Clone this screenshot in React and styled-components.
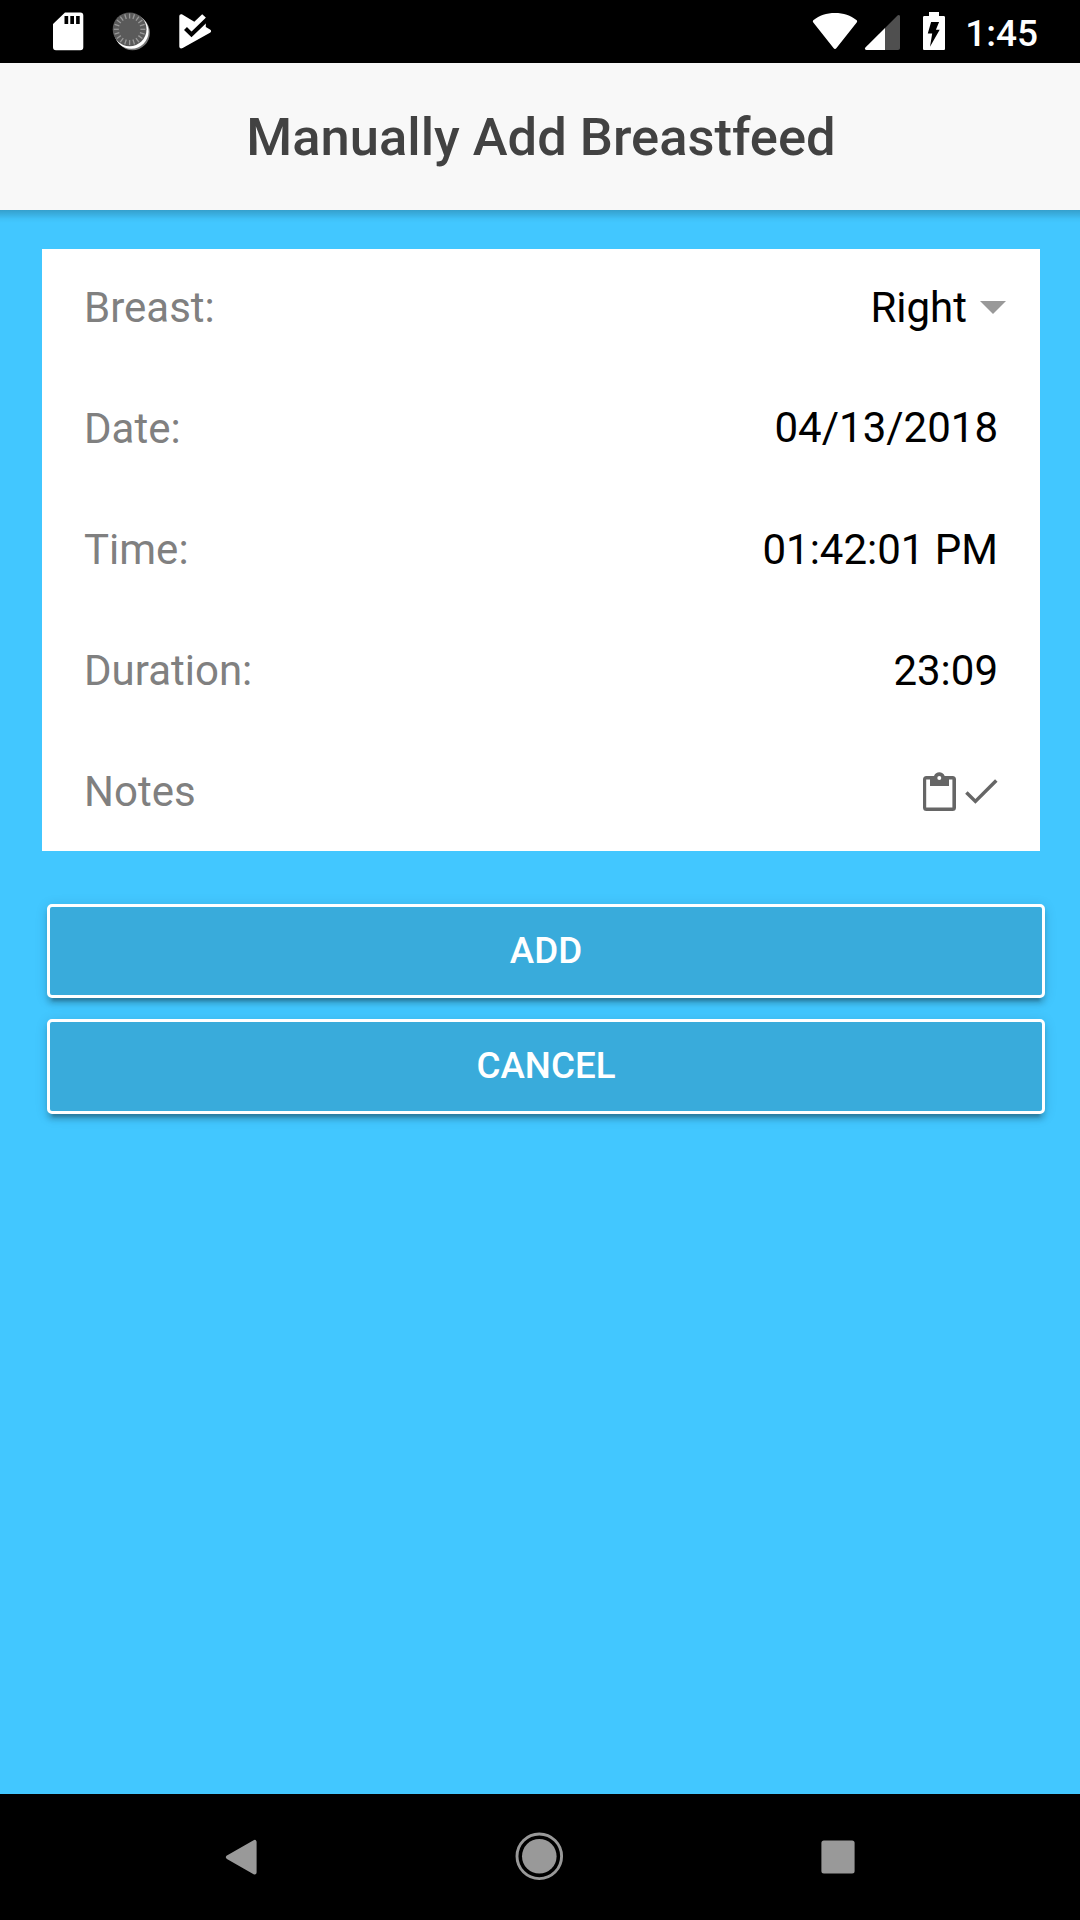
import React from 'react';
import styled, { createGlobalStyle } from 'styled-components';

const GlobalStyle = createGlobalStyle`
  * { box-sizing: border-box; }
  body { margin: 0; background: #42c7ff; font-family: Roboto, "Noto Sans", sans-serif; }
  svg { display: block; flex: none; }
`;

const Screen = styled.div`
  display: flex;
  flex-direction: column;
  width: 1080px;
  height: 1920px;
  background: #42c7ff;
  overflow: hidden;
`;

const StatusBar = styled.div`
  display: flex;
  justify-content: space-between;
  height: 63px;
  flex: none;
  padding: 0 42px 0 44px;
  background: #000;
  color: #fff;
`;

const StatusGroup = styled.div`
  display: flex;
  gap: ${(p) => p.$gap}px;
`;

const Clock = styled.span`
  margin-left: 10px;
  font-size: 37px;
  font-weight: 500;
  line-height: 67px;
`;

const Header = styled.header`
  display: flex;
  align-items: center;
  justify-content: center;
  height: 147px;
  flex: none;
  background: #f8f8f8;
`;

const Title = styled.h1`
  margin: 0;
  padding: 2px 0 0 2px;
  color: #424242;
  font-size: 52.5px;
  font-weight: 500;
  line-height: 63px;
  white-space: nowrap;
`;

const Content = styled.main`
  flex: 1;
  padding: 39px 35px 0 42px;
  background: linear-gradient(
      rgba(0, 0, 0, 0.2) 0,
      rgba(0, 0, 0, 0.11) 5px,
      rgba(0, 0, 0, 0.03) 9px,
      rgba(0, 0, 0, 0) 13px
    )
    no-repeat;
`;

const Card = styled.section`
  display: flex;
  flex-direction: column;
  gap: 3px;
  width: 998px;
  background: #fff;
`;

const Row = styled.div`
  display: flex;
  align-items: center;
  justify-content: space-between;
  height: 118px;
  padding: 0 ${(p) => p.$end ?? 42}px 0 42px;
  font-size: 42px;
  line-height: 50px;
`;

const Label = styled.span`
  color: #808080;
`;

const Value = styled.span`
  color: #000;
  padding-bottom: ${(p) => p.$lift ?? 0}px;
`;

const Select = styled.div`
  display: flex;
  align-items: center;
  gap: 13px;
`;

const Caret = styled.span`
  margin-bottom: 2px;
  border: 13px solid transparent;
  border-top-color: #999;
  border-bottom: 0;
`;

const NoteIcons = styled.div`
  display: flex;
  align-items: center;
  gap: 9px;
  padding-bottom: 2px;
`;

const Actions = styled.div`
  display: flex;
  flex-direction: column;
  gap: 21px;
  width: 998px;
  margin: 53px 0 0 5px;
`;

const Button = styled.button`
  height: ${(p) => p.$height}px;
  padding: 0 0 ${(p) => p.$lift ?? 0}px;
  border: 3px solid #fff;
  border-radius: 5px;
  background: #39abdb;
  color: #fff;
  font: 500 36.75px/44px Roboto, "Noto Sans", sans-serif;
  text-transform: uppercase;
  box-shadow:
    0 5.25px 5.25px 0 rgba(0, 0, 0, 0.14),
    0 7.9px 2.6px -5.25px rgba(0, 0, 0, 0.2),
    0 2.6px 13px 0 rgba(0, 0, 0, 0.12);
`;

const NavBar = styled.nav`
  display: flex;
  align-items: center;
  justify-content: space-between;
  height: 126px;
  flex: none;
  padding: 0 212px 0 211px;
  background: #000;
`;

const SdIcon = () => (
  <svg width="48" height="63" viewBox="0 0 48 63">
    <path fill="#fff" d="M21 12.500h15.300a3 3 0 0 1 3 3v31.800a3 3 0 0 1-3 3h-24.300a3 3 0 0 1-3-3v-23.300z" />
    <path fill="#000" d="M20.500 16h3.700v8h-3.700zM26.300 16h3.700v8h-3.700zM32.100 16h3.600v8h-3.600z" />
  </svg>
);

const SPOKES = Array.from({ length: 20 }, (_, i) => i * 18);

const SpinnerIcon = () => (
  <svg width="48" height="63" viewBox="0 0 48 63">
    <circle cx="25.500" cy="32.800" r="17.400" fill="#777" />
    <circle cx="24.300" cy="31.500" r="17.300" fill="#fff" />
    <circle cx="22.600" cy="29.300" r="16.900" fill="#5a5a5a" />
    {SPOKES.map((a) => (
      <path key={a} d="M22.600 13.500v5" stroke="#999" strokeWidth="1.300" transform={`rotate(${a} 22.600 29.300)`} />
    ))}
  </svg>
);

const PlayCheckIcon = () => (
  <svg width="48" height="63" viewBox="0 0 48 63">
    <path
      fill="#fff"
      d="M9.300 16.500c0-2 1.500-2.800 3-2l12 7.200 7.900-7.400 3.600 3.200V27L40 29.600c1.500.9 1.500 2.300 0 3.200L12.700 48c-2 1-3.400.2-3.400-1.700z"
    />
    <path fill="none" stroke="#000" strokeWidth="4.200" d="M15.500 28.500l6 5.900L38 18.500" />
  </svg>
);

const WifiIcon = () => (
  <svg width="48" height="63" viewBox="0 0 48 63">
    <path fill="#fff" d="M2.300 22.600c-.7-.9-.6-1.800.3-2.500C8.300 15.600 15.500 13 24 13s15.700 2.600 21.400 7.100c.9.700 1 1.600.3 2.500L25.500 48c-.9 1.200-2.100 1.200-3 0z" />
  </svg>
);

const SignalIcon = () => (
  <svg width="48" height="63" viewBox="0 0 48 63">
    <path fill="#fff" d="M26 28v22H7.500c-1.700 0-2-1.500-1.100-2.400z" />
    <path fill="#4f4f4f" d="M26 28l12.500-12.400c1-1 2.500-.5 2.500.9V48c0 1.300-.7 2-2 2H26z" />
  </svg>
);

const BatteryIcon = () => (
  <svg width="48" height="63" viewBox="0 0 48 63">
    <path fill="#fff" d="M22 12h10v4h4.500c1 0 1.500.5 1.500 1.500v31c0 1-.5 1.500-1.500 1.500h-19c-1 0-1.500-.5-1.500-1.500v-31c0-1 .5-1.500 1.500-1.500H22z" />
    <path fill="#000" d="M24.100 22h8l-3.200 7.700h3.800L23 46.700l2.200-13.200h-4.400z" />
  </svg>
);

const ClipboardIcon = () => (
  <svg width="33" height="39" viewBox="0 0 33 39">
    <path
      fill="#666"
      fillRule="evenodd"
      d="M3.500 4H11C12 1.500 13.900.3 16.300.3S20.700 1.500 21.700 4h7.800A3.500 3.500 0 0 1 33 7.500v28a3.500 3.500 0 0 1-3.500 3.500h-26A3.500 3.500 0 0 1 0 35.500v-28A3.500 3.500 0 0 1 3.500 4zM3.200 7.500v28h26.200v-28H26V14H7V7.500zM16.300 4a2 2 0 1 0 0 4 2 2 0 0 0 0-4z"
    />
  </svg>
);

const CheckIcon = () => (
  <svg width="33" height="39" viewBox="0 0 33 39">
    <path fill="none" stroke="#666" strokeWidth="3.500" d="M1.400 20.500l9 8.900L31.300 8.500" />
  </svg>
);

const BackIcon = () => (
  <svg width="60" height="60" viewBox="0 0 60 60">
    <path fill="#999" stroke="#999" strokeWidth="4" strokeLinejoin="round" d="M16.900 30.200L43.600 14.900v30.500z" />
  </svg>
);

const HomeIcon = () => (
  <svg width="60" height="60" viewBox="0 0 60 60">
    <circle cx="29.300" cy="29.300" r="22.300" fill="none" stroke="#999" strokeWidth="2.900" />
    <circle cx="29.300" cy="29.300" r="17.300" fill="#999" />
  </svg>
);

const RecentsIcon = () => (
  <svg width="60" height="60" viewBox="0 0 60 60">
    <rect x="13.400" y="13.400" width="33.200" height="33.200" rx="2.500" fill="#999" />
  </svg>
);

export default function App() {
  return (
    <>
      <GlobalStyle />
      <Screen>
        <StatusBar>
          <StatusGroup $gap={15}>
            <SdIcon />
            <SpinnerIcon />
            <PlayCheckIcon />
          </StatusGroup>
          <StatusGroup $gap={0}>
            <WifiIcon />
            <SignalIcon />
            <BatteryIcon />
            <Clock>1:45</Clock>
          </StatusGroup>
        </StatusBar>
        <Header>
          <Title>Manually Add Breastfeed</Title>
        </Header>
        <Content>
          <Card>
            <Row $end={34}>
              <Label>Breast:</Label>
              <Select>
                <Value>Right</Value>
                <Caret />
              </Select>
            </Row>
            <Row>
              <Label>Date:</Label>
              <Value $lift={2}>04/13/2018</Value>
            </Row>
            <Row>
              <Label>Time:</Label>
              <Value>01:42:01 PM</Value>
            </Row>
            <Row>
              <Label>Duration:</Label>
              <Value>23:09</Value>
            </Row>
            <Row>
              <Label>Notes</Label>
              <NoteIcons>
                <ClipboardIcon />
                <CheckIcon />
              </NoteIcons>
            </Row>
          </Card>
          <Actions>
            <Button $height={94}>Add</Button>
            <Button $height={95} $lift={1}>Cancel</Button>
          </Actions>
        </Content>
        <NavBar>
          <BackIcon />
          <HomeIcon />
          <RecentsIcon />
        </NavBar>
      </Screen>
    </>
  );
}
